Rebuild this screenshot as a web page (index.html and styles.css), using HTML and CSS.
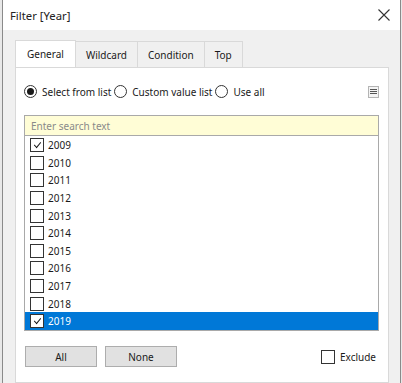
FILE: index.html
```html
<!DOCTYPE html>
<html lang="en">
<head>
    <meta charset="UTF-8">
    <meta name="viewport" content="width=device-width, initial-scale=1.0">
    <title>Filter [Year]</title>
    <link rel="stylesheet" href="styles.css">
</head>
<body>
    <div class="window">
        <div class="titlebar">
            <span class="title">Filter [Year]</span>
            <svg class="close" width="12" height="12" viewBox="0 0 12 12" stroke="#333" stroke-width="1.1">
                <path d="M0.5 0.5L11.5 11.5M11.5 0.5L0.5 11.5"></path>
            </svg>
        </div>

        <div class="content">
            <div class="tabs">
                <div class="tab active">General</div>
                <div class="tab">Wildcard</div>
                <div class="tab">Condition</div>
                <div class="tab">Top</div>
            </div>

            <div class="panel">
                <div class="mode-row">
                    <label class="radio"><span class="dot checked"></span>Select from list</label>
                    <label class="radio"><span class="dot"></span>Custom value list</label>
                    <label class="radio"><span class="dot"></span>Use all</label>
                    <span class="menu-btn">
                        <svg width="7" height="7" viewBox="0 0 7 7" stroke="#555" stroke-width="1">
                            <path d="M0 1.5H7M0 3.5H7M0 5.5H7"></path>
                        </svg>
                    </span>
                </div>

                <div class="values">
                    <div class="search">Enter search text</div>
                    <div class="list" id="yearList"></div>
                </div>

                <div class="footer">
                    <button class="btn">All</button>
                    <button class="btn">None</button>
                    <label class="exclude"><span class="box"></span>Exclude</label>
                </div>
            </div>
        </div>
    </div>

    <script>
        const years = [2009, 2010, 2011, 2012, 2013, 2014, 2015, 2016, 2017, 2018, 2019];
        const checked = [2009, 2019];
        const list = document.getElementById("yearList");

        years.forEach(function (year) {
            const row = document.createElement("div");
            row.classList.add("item");
            if (year === 2019) row.classList.add("selected");

            const box = document.createElement("span");
            box.classList.add("box");
            if (checked.includes(year)) box.classList.add("checked");
            row.appendChild(box);

            const label = document.createElement("span");
            label.textContent = year;
            row.appendChild(label);

            list.appendChild(row);
        });
    </script>
</body>
</html>
```

FILE: styles.css
```css
* {
    box-sizing: border-box;
    margin: 0;
    padding: 0;
}

body {
    width: 402px;
    height: 383px;
    overflow: hidden;
    background-color: #e8e8e8;
    font-family: "Noto Sans", "Open Sans", sans-serif;
    font-size: 10px;
    color: #1a1a1a;
}

/* dialog frame */
.window {
    margin-left: 2px;
    width: 399px;
    height: 383px;
    border-left: 1px solid #8a8a8a;
    border-right: 1px solid #8a8a8a;
    display: flex;
    flex-direction: column;
}

.titlebar {
    height: 30px;
    background-color: #ffffff;
    display: flex;
    align-items: center;
    justify-content: space-between;
    padding: 0 10px 0 7px;
}

.title {
    font-size: 11.3px;
    color: #222;
}

.content {
    flex-grow: 1;
    background-color: #f0f0f0;
    padding: 11px 11px 0 12px;
    display: flex;
    flex-direction: column;
}

/* tabs */
.tabs {
    display: flex;
    height: 26px;
    position: relative;
    z-index: 1;
}

.tab {
    height: 26px;
    padding: 0 10px;
    display: flex;
    align-items: center;
    border: 1px solid #d9d9d9;
    border-left: none;
    border-bottom: none;
    background-color: #f0f0f0;
}

.tab.active {
    background-color: #ffffff;
    border-left: 1px solid #d9d9d9;
    height: 27px;
    margin-top: -1px;
    padding: 0 11px;
}

.panel {
    flex-grow: 1;
    background-color: #ffffff;
    border: 1px solid #d9d9d9;
    padding: 0 9px 0 8px;
    display: flex;
    flex-direction: column;
}

/* radio row */
.mode-row {
    display: flex;
    align-items: center;
    height: 47px;
}

.radio {
    display: flex;
    align-items: center;
    gap: 5px;
    margin-right: 3px;
}

.dot {
    width: 13px;
    height: 13px;
    border: 1px solid #333;
    border-radius: 50%;
    background-color: #fff;
    display: flex;
    align-items: center;
    justify-content: center;
}

.dot.checked::after {
    content: "";
    width: 7px;
    height: 7px;
    border-radius: 50%;
    background-color: #1a1a1a;
}

.menu-btn {
    margin-left: auto;
    width: 11px;
    height: 12px;
    border: 1px solid #b4b4b4;
    background-color: #f4f4f4;
    display: flex;
    align-items: center;
    justify-content: center;
}

/* values list */
.values {
    border: 1px solid #a9a9a9;
    width: 355px;
}

.search {
    height: 20px;
    background-color: #fffdd6;
    border-bottom: 1px solid #a9a9a9;
    color: #8a8a8a;
    padding-left: 6px;
    display: flex;
    align-items: center;
}

.list {
    padding-top: 0.5px;
}

.item {
    height: 17.6px;
    display: flex;
    align-items: center;
    gap: 4px;
    padding-left: 5px;
}

.item.selected {
    background-color: #0078d7;
    color: #ffffff;
}

.box {
    width: 14px;
    height: 14px;
    border: 1px solid #333;
    background-color: #fff;
    display: flex;
    align-items: center;
    justify-content: center;
}

.box.checked::after {
    content: "";
    width: 6px;
    height: 3px;
    border-left: 1.6px solid #111;
    border-bottom: 1.6px solid #111;
    transform: translateY(-1px) rotate(-50deg) skewX(-8deg);
}

/* footer */
.footer {
    display: flex;
    align-items: center;
    gap: 8px;
    margin-top: 15px;
    padding-left: 1px;
}

.btn {
    width: 72px;
    height: 21px;
    background-color: #e1e1e1;
    border: 1px solid #adadad;
    font-family: inherit;
    font-size: 10px;
    color: #1a1a1a;
}

.exclude {
    margin-left: auto;
    margin-right: 3px;
    display: flex;
    align-items: center;
    gap: 5px;
}
```
